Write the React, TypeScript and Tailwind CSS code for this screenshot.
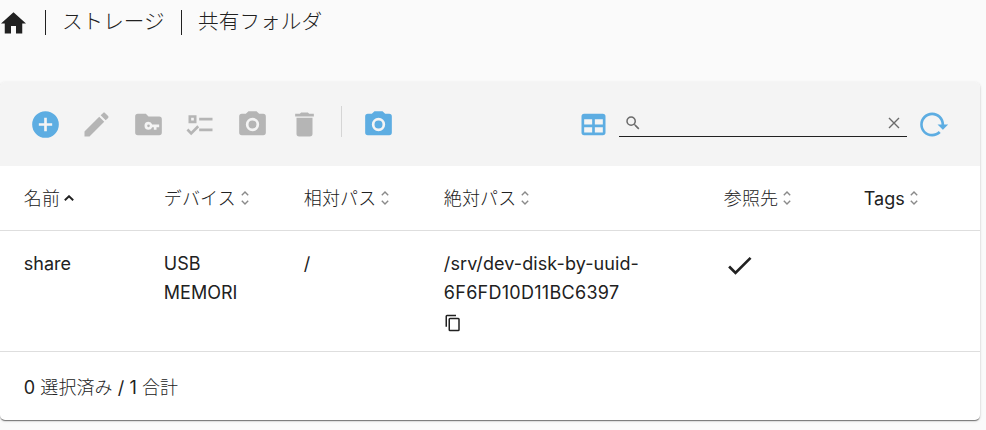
import React from 'react';

const paths = {
  home: 'M10,20V14H14V20H19V12H22L12,3L2,12H5V20H10Z',
  add: 'M17,13H13V17H11V13H7V11H11V7H13V11H17M12,2A10,10 0 0,0 2,12A10,10 0 0,0 12,22A10,10 0 0,0 22,12A10,10 0 0,0 12,2Z',
  edit: 'M20.71,7.04C21.1,6.65 21.1,6 20.71,5.63L18.37,3.29C18,2.9 17.35,2.9 16.96,3.29L15.12,5.12L18.87,8.87M3,17.25V21H6.75L17.81,9.93L14.06,6.18L3,17.25Z',
  folderKey:
    'M4,4H10L12,6H20A2,2 0 0,1 22,8V18A2,2 0 0,1 20,20H4A2,2 0 0,1 2,18V6A2,2 0 0,1 4,4M14.8,12A3,3 0 0,0 12,10A3,3 0 0,0 9,13A3,3 0 0,0 12,16A3,3 0 0,0 14.8,14H16V16H18V14H20V12H14.8M12,12A1,1 0 0,1 13,13A1,1 0 0,1 12,14A1,1 0 0,1 11,13A1,1 0 0,1 12,12Z',
  checks:
    'M3,5H9V11H3V5M5,7V9H7V7H5M11,7H21V9H11V7M11,15H21V17H11V15M5,20L1.5,16.5L2.91,15.09L5,17.17L9.59,12.59L11,14L5,20Z',
  camera:
    'M4,4H7L9,2H15L17,4H20A2,2 0 0,1 22,6V18A2,2 0 0,1 20,20H4A2,2 0 0,1 2,18V6A2,2 0 0,1 4,4M12,7A5,5 0 0,0 7,12A5,5 0 0,0 12,17A5,5 0 0,0 17,12A5,5 0 0,0 12,7M12,9A3,3 0 0,1 15,12A3,3 0 0,1 12,15A3,3 0 0,1 9,12A3,3 0 0,1 12,9Z',
  trash: 'M19,4H15.5L14.5,3H9.5L8.5,4H5V6H19M6,19A2,2 0 0,0 8,21H16A2,2 0 0,0 18,19V7H6V19Z',
  table:
    'M5,4H19A2,2 0 0,1 21,6V18A2,2 0 0,1 19,20H5A2,2 0 0,1 3,18V6A2,2 0 0,1 5,4M5,8V12H11V8H5M13,8V12H19V8H13M5,14V18H11V14H5M13,14V18H19V14H13Z',
  search:
    'M9.5,3A6.5,6.5 0 0,1 16,9.5C16,11.11 15.41,12.59 14.44,13.73L14.71,14H15.5L20.5,19L19,20.5L14,15.5V14.71L13.73,14.44C12.59,15.41 11.11,16 9.5,16A6.5,6.5 0 0,1 3,9.5A6.5,6.5 0 0,1 9.5,3M9.5,5C7,5 5,7 5,9.5C5,12 7,14 9.5,14C12,14 14,12 14,9.5C14,7 12,5 9.5,5Z',
  reload:
    'M2 12C2 16.97 6.03 21 11 21C13.39 21 15.68 20.06 17.4 18.4L15.9 16.9C14.63 18.25 12.86 19 11 19C4.76 19 1.64 11.46 6.05 7.05C10.46 2.64 18 5.77 18 12H15L19 16H19.1L23 12H20C20 7.03 15.97 3 11 3C6.03 3 2 7.03 2 12Z',
  check: 'M21,7L9,19L3.5,13.5L4.91,12.09L9,16.17L19.59,5.59L21,7Z',
  copy: 'M19,21H8V7H19M19,5H8A2,2 0 0,0 6,7V21A2,2 0 0,0 8,23H19A2,2 0 0,0 21,21V7A2,2 0 0,0 19,5M16,1H4A2,2 0 0,0 2,3V17H4V3H16V1Z',
};

function Icon({ name, className }: { name: keyof typeof paths; className: string }) {
  return (
    <svg viewBox="0 0 24 24" fill="currentColor" fillRule="evenodd" className={`block shrink-0 ${className}`}>
      <path d={paths[name]} />
    </svg>
  );
}

function ToolIcon({ name, className = '' }: { name: keyof typeof paths; className?: string }) {
  return <Icon name={name} className={`size-8 -translate-x-[0.5px] -translate-y-[0.5px] ${className}`} />;
}

function SortArrows() {
  return (
    <svg viewBox="0 0 8 14" className="ml-[5px] h-[14px] w-2 shrink-0 text-[#8a8a8a]" fill="none" stroke="currentColor" strokeWidth="1.4">
      <path d="M0.8 4.2L4 1L7.2 4.2M0.8 9.8L4 13L7.2 9.8" />
    </svg>
  );
}

function HeaderCell({ label, sorted = false, latin = false }: { label: string; sorted?: boolean; latin?: boolean }) {
  return (
    <div className="flex items-center whitespace-nowrap">
      <span className={latin ? 'font-normal' : 'font-light tracking-[0.15px]'}>{label}</span>
      {sorted ? (
        <svg viewBox="0 0 10 6" className="ml-1 h-1.5 w-2.5" fill="none" stroke="currentColor" strokeWidth="1.9">
          <path d="M0.8 5.2L5 1.2L9.2 5.2" />
        </svg>
      ) : (
        <SortArrows />
      )}
    </div>
  );
}

const columns = 'grid grid-cols-[140px_140px_140px_280px_140px_1fr] pl-[23.8px]';

export default function App() {
  return (
    <div className="h-[430px] w-[986px] overflow-hidden bg-[#fafafa] font-['Inter','Noto_Sans_CJK_JP',sans-serif] text-[18px] text-[#212121]">
      <nav className="flex h-[82px] items-start pt-2 text-[20.6px] leading-[26px]">
        <Icon name="home" className="-ml-[2px] size-[30px] translate-x-[0.5px] translate-y-[0.5px]" />
        <span className="mt-0.5 ml-[17px] h-[25px] w-px bg-[#212121]" />
        <span className="mt-px ml-4 w-[103px] whitespace-nowrap font-light">ストレージ</span>
        <span className="mt-0.5 ml-4 h-[25px] w-px bg-[#212121]" />
        <span className="mt-px ml-4 whitespace-nowrap font-light tracking-[0.1px]">共有フォルダ</span>
      </nav>

      <main className="flex h-[338px] w-[980px] flex-col overflow-hidden rounded-[5px] bg-white shadow-[0_2px_1px_-1px_rgba(0,0,0,0.3),0_1px_1px_rgba(0,0,0,0.24),0_1px_3px_rgba(0,0,0,0.16)]">
        <div className="flex h-[84px] shrink-0 items-center bg-[#f4f4f4] pt-0.5 pl-[30px] text-[#b5b5b5]">
          <div className="flex items-center gap-5">
            <ToolIcon name="add" className="text-[#5dade2]" />
            <ToolIcon name="edit" className="-ml-px" />
            <ToolIcon name="folderKey" />
            <ToolIcon name="checks" />
            <ToolIcon name="camera" />
            <ToolIcon name="trash" />
            <span className="-mt-[7px] h-[31px] w-px bg-[#d5d5d5]" />
            <ToolIcon name="camera" className="ml-px text-[#5dade2]" />
          </div>
          <ToolIcon name="table" className="ml-[183px] text-[#5dade2]" />
          <div className="-mt-2 ml-[9px] flex h-[31px] w-[288px] items-center justify-between border-b border-[#212121] pr-[7px] pl-1 text-[#6b6b6b]">
            <Icon name="search" className="mt-[5px] ml-px size-[18px]" />
            <svg viewBox="0 0 12 12" className="mt-1 size-3" fill="none" stroke="currentColor" strokeWidth="1.4">
              <path d="M1 1L11 11M11 1L1 11" />
            </svg>
          </div>
          <ToolIcon name="reload" className="ml-[11px] text-[#5dade2]" />
        </div>

        <div className={`${columns} h-[65px] shrink-0 border-b border-[#dedede]`}>
          <HeaderCell label="名前" sorted />
          <HeaderCell label="デバイス" />
          <HeaderCell label="相対パス" />
          <HeaderCell label="絶対パス" />
          <HeaderCell label="参照先" />
          <HeaderCell label="Tags" latin />
        </div>

        <div className={`${columns} h-[121px] shrink-0 border-b border-[#dedede] pt-[18px] leading-[29px]`}>
          <div>share</div>
          <div>
            USB
            <br />
            MEMORI
          </div>
          <div>/</div>
          <div>
            <div className="tracking-[0.1px]">/srv/dev-disk-by-uuid-</div>
            <div className="tracking-[0.28px]">6F6FD10D11BC6397</div>
            <Icon name="copy" className="mt-[7px] size-[18px]" />
          </div>
          <div>
            <Icon name="check" className="size-8 -translate-x-[0.5px] translate-y-[0.5px]" />
          </div>
        </div>

        <div className="flex flex-1 items-center pt-0.5 pl-[23.8px]">
          <p className="tracking-[0.06px]">
            0 <span className="font-light">選択済み</span> / 1 <span className="font-light">合計</span>
          </p>
        </div>
      </main>
    </div>
  );
}
